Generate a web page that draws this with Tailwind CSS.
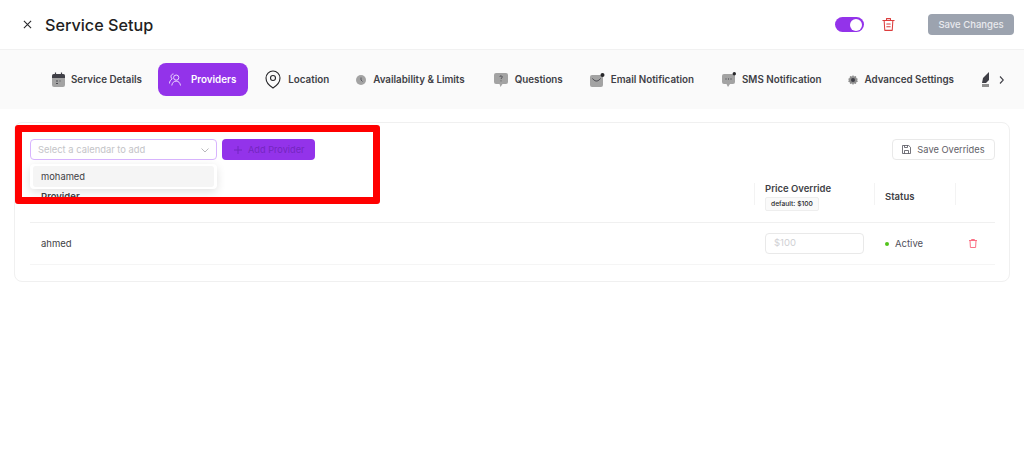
<!DOCTYPE html>
<html lang="en">
<head>
  <meta charset="UTF-8">
  <meta name="viewport" content="width=device-width, initial-scale=1.0">
  <title>Service Setup</title>
  <script src="https://cdn.jsdelivr.net/npm/@tailwindcss/browser@4"></script>
</head>
<body class="bg-white min-h-screen overflow-hidden font-['Inter',sans-serif] text-[#27272a]">

  <!-- Header -->
  <header class="h-[50px] flex items-center pl-[23px] pr-[10px] border-b border-[#f1f1f1]">
    <svg class="w-[9px] h-[9px] text-[#27272a]" viewBox="0 0 10 10" fill="none" stroke="currentColor" stroke-width="1.2"><path d="M1 1l8 8M9 1l-8 8"/></svg>
    <h1 class="ml-[13px] pt-px text-[16.2px] font-medium text-[#1f1f23]">Service Setup</h1>
    <div class="ml-auto flex items-center">
      <div class="w-[29px] h-[15px] rounded-full bg-[#9333ea] flex items-center justify-end pr-[2px]">
        <div class="w-[12px] h-[12px] rounded-full bg-white"></div>
      </div>
      <svg class="ml-[18px] w-[13px] h-[15px] text-[#dc3d3d]" viewBox="0 0 15 16" fill="none" stroke="currentColor" stroke-width="1.2" stroke-linecap="round" stroke-linejoin="round"><path d="M1 3.500h13M5.200 3.500V1.200h4.600v2.300M2.500 3.500l.7 11.300h8.600l.7-11.300M5.500 7.500h4M5.500 10.500h4"/></svg>
      <button class="ml-[33px] w-[86px] h-[21px] pt-px rounded-[4px] bg-[#9ca3af] text-[#e9eaee] text-[9.500px] font-medium">Save Changes</button>
    </div>
  </header>

  <!-- Tabs -->
  <nav class="h-[59px] bg-[#fafafa] flex items-center pl-[52px] relative overflow-hidden text-[9.800px] font-semibold text-[#3f3f46] whitespace-nowrap">
    <div class="flex items-center gap-[28px]">
      <a class="flex items-center gap-[6px]">
        <svg class="w-[13px] h-[15px]" viewBox="0 0 13 15"><rect x="0" y="2" width="13" height="13" rx="2" fill="#a3a3a3"/><path d="M0 6V4a2 2 0 0 1 2-2h9a2 2 0 0 1 2 2v2z" fill="#3f3f46"/><path d="M3.500 .5v3M9.500 .5v3" stroke="#3f3f46" stroke-width="1.200"/><path d="M4 9h2M4 11.500h2M7.500 9h1" stroke="#4b4b50" stroke-width="1"/></svg>
        <span class="pt-px">Service Details</span>
      </a>
      <a class="flex items-center gap-[10px] -ml-[12px] -mr-[11px] pl-[11px] pr-[12px] h-[33px] rounded-[8px] bg-[#9333ea] text-white">
        <svg class="w-[12px] h-[13px]" viewBox="0 0 12 13" fill="none" stroke="#f3e8ff" stroke-width=".9"><circle cx="7.200" cy="4.600" r="2.600"/><path d="M2.800 12.500c.3-2.600 2-4.400 4.400-4.400s3.900 1.800 4.300 4.400"/><path d="M4.500 1C3 1 2 2.200 2 3.600c0 1 .5 1.800 1.200 2.300C1.500 6.800.6 8.500.4 10.500"/></svg>
        <span class="pt-px">Providers</span>
      </a>
      <a class="flex items-center gap-[7px]">
        <svg class="w-[16px] h-[19px]" viewBox="0 0 16 19" fill="none" stroke="#27272a" stroke-width="1.100"><path d="M8 18C4 15.500 1 12 1 8a7 7 0 0 1 14 0c0 4-3 7.500-7 10z"/><circle cx="8" cy="8" r="2.500"/></svg>
        <span class="pt-px">Location</span>
      </a>
      <a class="flex items-center gap-[7px] -ml-px">
        <svg class="w-[10px] h-[10px]" viewBox="0 0 10 10"><circle cx="5" cy="5" r="5" fill="#a3a3a3"/><path d="M5 2.500V5l1.500 1.500" stroke="#52525b" stroke-width=".9" fill="none"/></svg>
        <span class="pt-px">Availability &amp; Limits</span>
      </a>
      <a class="flex items-center gap-[7px] ml-px">
        <svg class="w-[14px] h-[14px]" viewBox="0 0 14 14"><path d="M2 0h10a2 2 0 0 1 2 2v7a2 2 0 0 1-2 2H8.500L6.500 14 5.500 11H2a2 2 0 0 1-2-2V2a2 2 0 0 1 2-2z" fill="#a3a3a3"/><path d="M5.800 4a1.200 1.200 0 1 1 1.800 1.100c-.4.300-.6.500-.6 1M7 7.500v.8" stroke="#3f3f46" stroke-width=".9" fill="none"/></svg>
        <span class="pt-px">Questions</span>
      </a>
      <a class="flex items-center gap-[6px] -ml-px">
        <svg class="w-[15px] h-[14px]" viewBox="0 0 15 14"><rect x="0" y="2" width="13" height="12" rx="2" fill="#a3a3a3"/><path d="M2.500 5.500c1.500 2 3 2.500 4 2.500s2.500-.5 4-2.500" stroke="#3f3f46" stroke-width="1" fill="none"/><circle cx="12.500" cy="2" r="2" fill="#27272a"/></svg>
        <span class="pt-px">Email Notification</span>
      </a>
      <a class="flex items-center gap-[6px]">
        <svg class="w-[14px] h-[15px]" viewBox="0 0 14 15"><path d="M2 2h9a2 2 0 0 1 2 2v6a2 2 0 0 1-2 2H8l-2 3-1.500-3H2a2 2 0 0 1-2-2V4a2 2 0 0 1 2-2z" fill="#a3a3a3"/><path d="M3.500 7h1M6 7h1M8.500 7h1" stroke="#3f3f46" stroke-width="1"/><circle cx="12.300" cy="1.700" r="1.700" fill="#27272a"/></svg>
        <span class="pt-px">SMS Notification</span>
      </a>
      <a class="flex items-center gap-[7px] -ml-[2px]">
        <svg class="w-[10px] h-[10px]" viewBox="0 0 10 10"><path d="M5 0l1 1.500L8 1l.3 2L10 4 9 5l1 1.500-1.700.7L8 9l-2-.4L5 10 4 8.600 2 9l-.3-1.800L0 6.500 1 5 0 4l1.700-1L2 1l2 .5z" fill="#8f8f8f"/><circle cx="5" cy="5" r="2" fill="#3f3f46"/></svg>
        <span class="pt-px">Advanced Settings</span>
      </a>
      <svg class="w-[7px] h-[15px] shrink-0" viewBox="0 0 7 15"><path d="M7 0L1 6l-1 5 4 0 3-3z" fill="#3f3f46"/><path d="M0 12h7v3H0z" fill="#8f8f8f"/></svg>
    </div>
    <div class="absolute right-0 top-0 h-full w-[30px] bg-[#fafafa] flex items-center pl-[5px]">
      <svg class="w-[5px] h-[8px]" viewBox="0 0 5 8" fill="none" stroke="#3f3f46" stroke-width="1.100"><path d="M1 .5L4.300 4 1 7.500"/></svg>
    </div>
  </nav>

  <!-- Main Content -->
  <main class="px-[14px] pt-[13px]">
    <div class="relative h-[160px] border border-[#f0f0f0] rounded-[8px] pt-[16px] pl-[15px] pr-[14px]">

      <div class="flex items-center h-[21px]">
        <div class="w-[187px] h-[21px] pt-px rounded-[4px] border-[1.500px] border-[#d8b4fe] flex items-center pl-[7px] pr-[7px] text-[9.400px] text-[#c4c4c8]">
          Select a calendar to add
          <svg class="ml-auto w-[8px] h-[5px]" viewBox="0 0 8 5" fill="none" stroke="#b8b8bc" stroke-width="1"><path d="M.5.5L4 4 7.500.5"/></svg>
        </div>
        <button class="ml-[5px] w-[93px] h-[21px] rounded-[4px] bg-[#9333ea] flex items-center pl-[12px] gap-[6px] text-[9.200px] text-[#7326c0]">
          <svg class="w-[8px] h-[8px]" viewBox="0 0 8 8" stroke="#7326c0" stroke-width="1"><path d="M4 0v8M0 4h8"/></svg>
          Add Provider
        </button>
        <button class="ml-auto w-[103px] h-[21px] rounded-[4px] border border-[#e9e9e9] flex items-center justify-center gap-[6px] text-[9.300px] text-[#5f5f68]">
          <svg class="w-[9px] h-[9px]" viewBox="0 0 9 9" fill="none" stroke="#52525b" stroke-width=".8"><path d="M.5.500h6.200L8.500 2.300V8.500H.5zM2.500.5v2h3v-2M2.500 8.500V5.500h4v3"/></svg>
          Save Overrides
        </button>
      </div>

      <table class="w-full mt-[22px] border-collapse text-[9.500px]">
        <thead>
          <tr class="h-[40px] border-b border-[#f0f0f0] font-semibold text-[#3f3f46]">
            <th class="pl-[11px] pb-[10px] text-left font-semibold">Provider</th>
            <th class="w-[120px] pl-[11px] pb-[10px] text-left font-semibold">
              <div class="leading-[13px]">Price Override</div>
              <span class="inline-block mt-[2px] h-[14px] px-[5px] leading-[12px] rounded-[2px] border border-[#eeeeee] bg-[#fafafa] text-[6.700px] font-medium text-[#27272a]">default: $100</span>
            </th>
            <th class="w-[81px] pl-[11px] pb-[10px] text-left font-semibold">Status</th>
            <th class="w-[40px]"></th>
          </tr>
        </thead>
        <tbody>
          <tr class="h-[42px] border-b border-[#f5f5f5]">
            <td class="pl-[11px] pt-[2px] text-[#3f3f46]">ahmed</td>
            <td class="pl-[11px]">
              <div class="w-[99px] h-[21px] pt-px rounded-[4px] border border-[#e9e9e9] flex items-center pl-[8px] text-[#d0d0d4]">$100</div>
            </td>
            <td class="pl-[11px] pt-[2px]">
              <span class="flex items-center gap-[6px] text-[#52525b]"><span class="w-[4px] h-[4px] rounded-full bg-[#52c41a]"></span>Active</span>
            </td>
            <td class="pl-[14px]">
              <svg class="w-[8px] h-[9px]" viewBox="0 0 8 9" fill="none" stroke="#fb7185" stroke-width="1"><path d="M0 1.500h8M2.500 1.500V.5h3v1M1 1.500l.4 7h5.200l.4-7"/></svg>
            </td>
          </tr>
        </tbody>
      </table>

      <!-- header column separators -->
      <div class="absolute top-[60px] left-[739px] w-px h-[22px] bg-[#f3f3f3]"></div>
      <div class="absolute top-[60px] left-[859px] w-px h-[22px] bg-[#f3f3f3]"></div>
      <div class="absolute top-[60px] left-[940px] w-px h-[22px] bg-[#f3f3f3]"></div>

      <!-- Dropdown -->
      <div class="absolute left-[15px] top-[41px] w-[187px] h-[25px] rounded-[4px] bg-white shadow-[0_3px_10px_rgba(0,0,0,0.12)] p-[2px_3px] text-[9.400px] text-[#3f3f46]">
        <div class="h-[21px] pt-px rounded-[3px] bg-[#f5f5f5] flex items-center pl-[8px]">mohamed</div>
      </div>
    </div>
  </main>

  <!-- Red annotation box -->
  <div class="absolute left-[15px] top-[125px] w-[365px] h-[79px] border-[7px] border-[#ff0000] rounded-[3px]"></div>

</body>
</html>
